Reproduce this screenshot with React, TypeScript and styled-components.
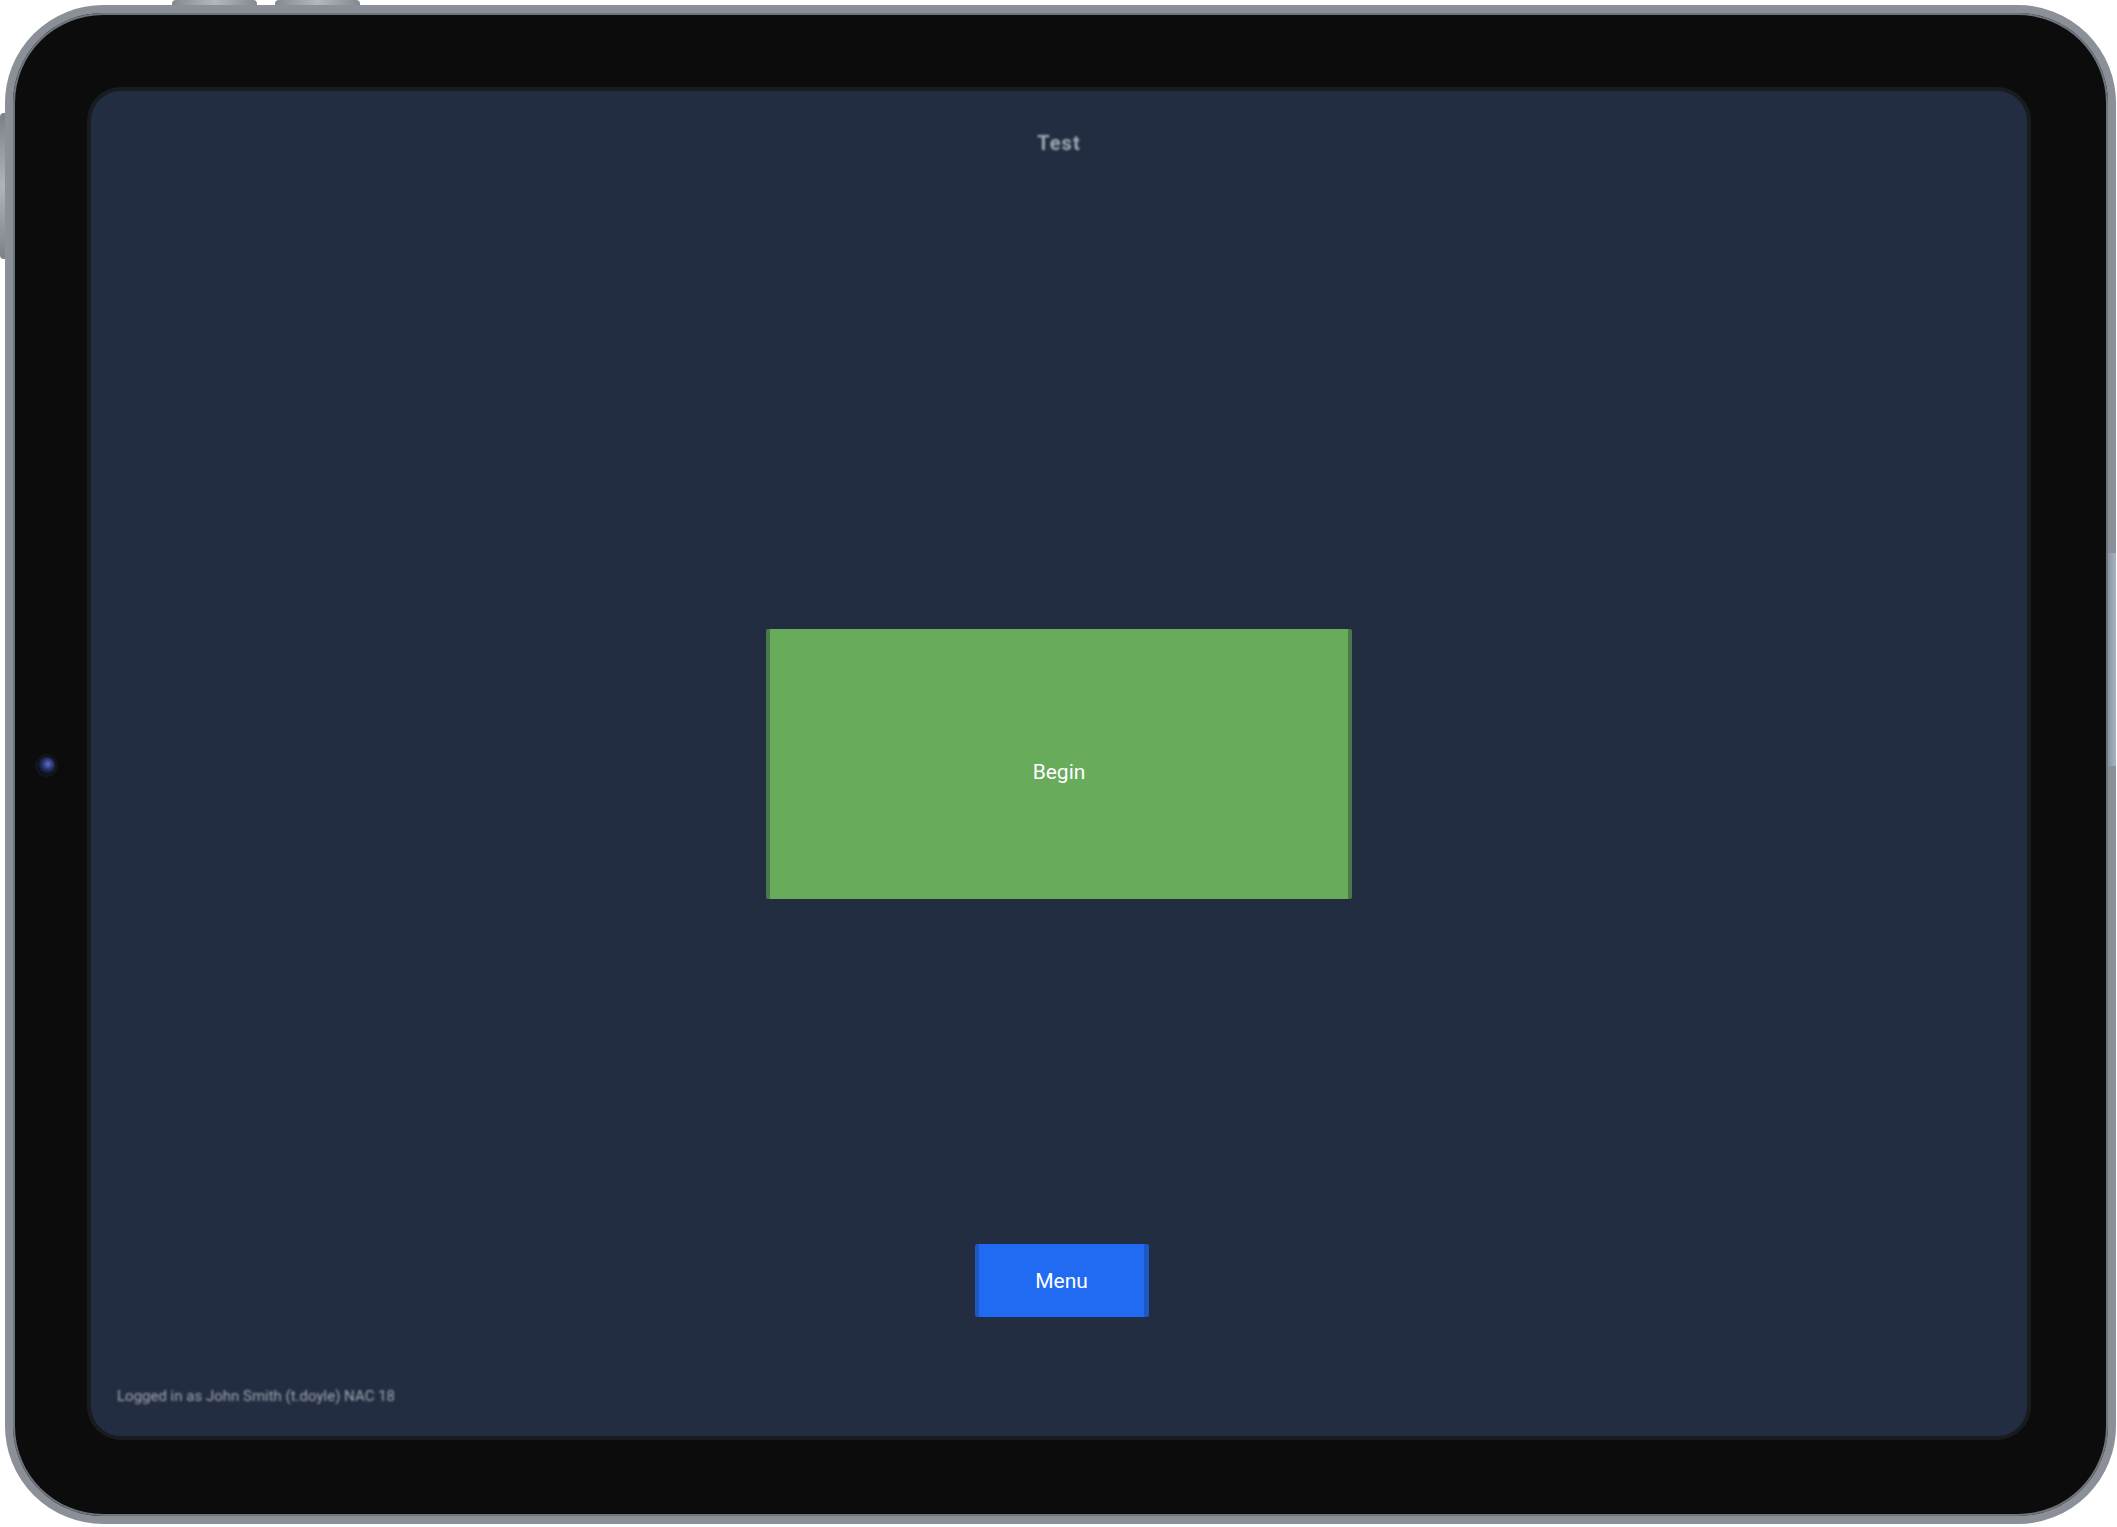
import styled, { createGlobalStyle } from 'styled-components';

const GlobalStyle = createGlobalStyle`
  html, body {
    margin: 0;
    padding: 0;
    background: #ffffff;
    overflow: hidden;
  }
  * {
    box-sizing: border-box;
  }
`;

const Stage = styled.div`
  width: 2117px;
  height: 1527px;
  padding: 5px 1px 3px 5px;
`;

const Device = styled.div`
  position: relative;
  height: 100%;
  display: flex;
  padding: 74px 77px 76px 74px;
  background: #0c0c0c;
  border: 8px solid #8b9098;
  border-radius: 98px;
  box-shadow: inset 0 0 0 2px #6f757d;
`;

// hardware keys sit on top of the frame edge
const TopKeys = styled.div`
  position: absolute;
  top: -13px;
  left: 159px;
  display: flex;
  gap: 18px;
`;

const TopKey = styled.div`
  width: 85px;
  height: 5px;
  border-radius: 4px 4px 0 0;
  background: linear-gradient(90deg, #84888f, #b4b8be 50%, #84888f);
`;

const SideKey = styled.div`
  position: absolute;
  left: -13px;
  top: 100px;
  width: 5px;
  height: 146px;
  border-radius: 4px 0 0 4px;
  background: linear-gradient(180deg, #7c8087, #b0b4ba 50%, #7c8087);
`;

const RightKey = styled.div`
  position: absolute;
  right: -8px;
  top: 540px;
  width: 8px;
  height: 213px;
  background: linear-gradient(90deg, #8a96a4, #a4b2c2);
`;

const Camera = styled.div`
  position: absolute;
  left: 25px;
  top: 744px;
  width: 17px;
  height: 17px;
  border-radius: 50%;
  background: radial-gradient(circle at 58% 42%, #5a72c0 0%, #26306a 40%, #080a14 78%);
  box-shadow: 0 0 0 3px #141518;
`;

const Screen = styled.div`
  flex: 1;
  display: flex;
  flex-direction: column;
  align-items: center;
  background: #232d42;
  border: 4px solid #191c1f;
  border-radius: 34px;
  font-family: Roboto, 'Liberation Sans', sans-serif;
  overflow: hidden;
`;

const Title = styled.div`
  margin-top: 42px;
  height: 20px;
  line-height: 20px;
  font-size: 20px;
  font-weight: 700;
  letter-spacing: 1px;
  color: #a3a9b4;
  filter: blur(1px);
`;

const ActionButton = styled.button<{ $tone: 'green' | 'blue' }>`
  display: flex;
  align-items: center;
  justify-content: center;
  padding: 0;
  border: none;
  border-radius: 2px;
  font-family: Roboto, 'Liberation Sans', sans-serif;
  font-size: 21px;
  font-weight: 400;
  color: #ffffff;
  cursor: pointer;
  background: ${(p) => (p.$tone === 'green' ? '#67ab5b' : '#216bf3')};
  border-left: 4px solid ${(p) => (p.$tone === 'green' ? '#4a7a4c' : '#1e58c4')};
  border-right: ${(p) => (p.$tone === 'green' ? 4 : 5)}px solid
    ${(p) => (p.$tone === 'green' ? '#4a7a4c' : '#1e58c4')};
`;

const BeginButton = styled(ActionButton)`
  margin-top: 476px;
  padding-top: 15px;
  width: 586px;
  height: 270px;
`;

const MenuButton = styled(ActionButton)`
  margin-top: 345px;
  margin-left: 6px;
  width: 174px;
  height: 73px;
`;

const Footer = styled.div`
  align-self: stretch;
  margin-top: auto;
  padding: 0 0 31px 26px;
  font-size: 15px;
  line-height: 18px;
  color: #a0a6b1;
  filter: blur(0.9px);
`;

export default function App() {
  return (
    <>
      <GlobalStyle />
      <Stage>
        <Device>
          <TopKeys>
            <TopKey />
            <TopKey />
          </TopKeys>
          <SideKey />
          <RightKey />
          <Camera />
          <Screen>
            <Title>Test</Title>
            <BeginButton $tone="green">Begin</BeginButton>
            <MenuButton $tone="blue">Menu</MenuButton>
            <Footer>Logged in as John Smith (t.doyle) NAC 18</Footer>
          </Screen>
        </Device>
      </Stage>
    </>
  );
}
